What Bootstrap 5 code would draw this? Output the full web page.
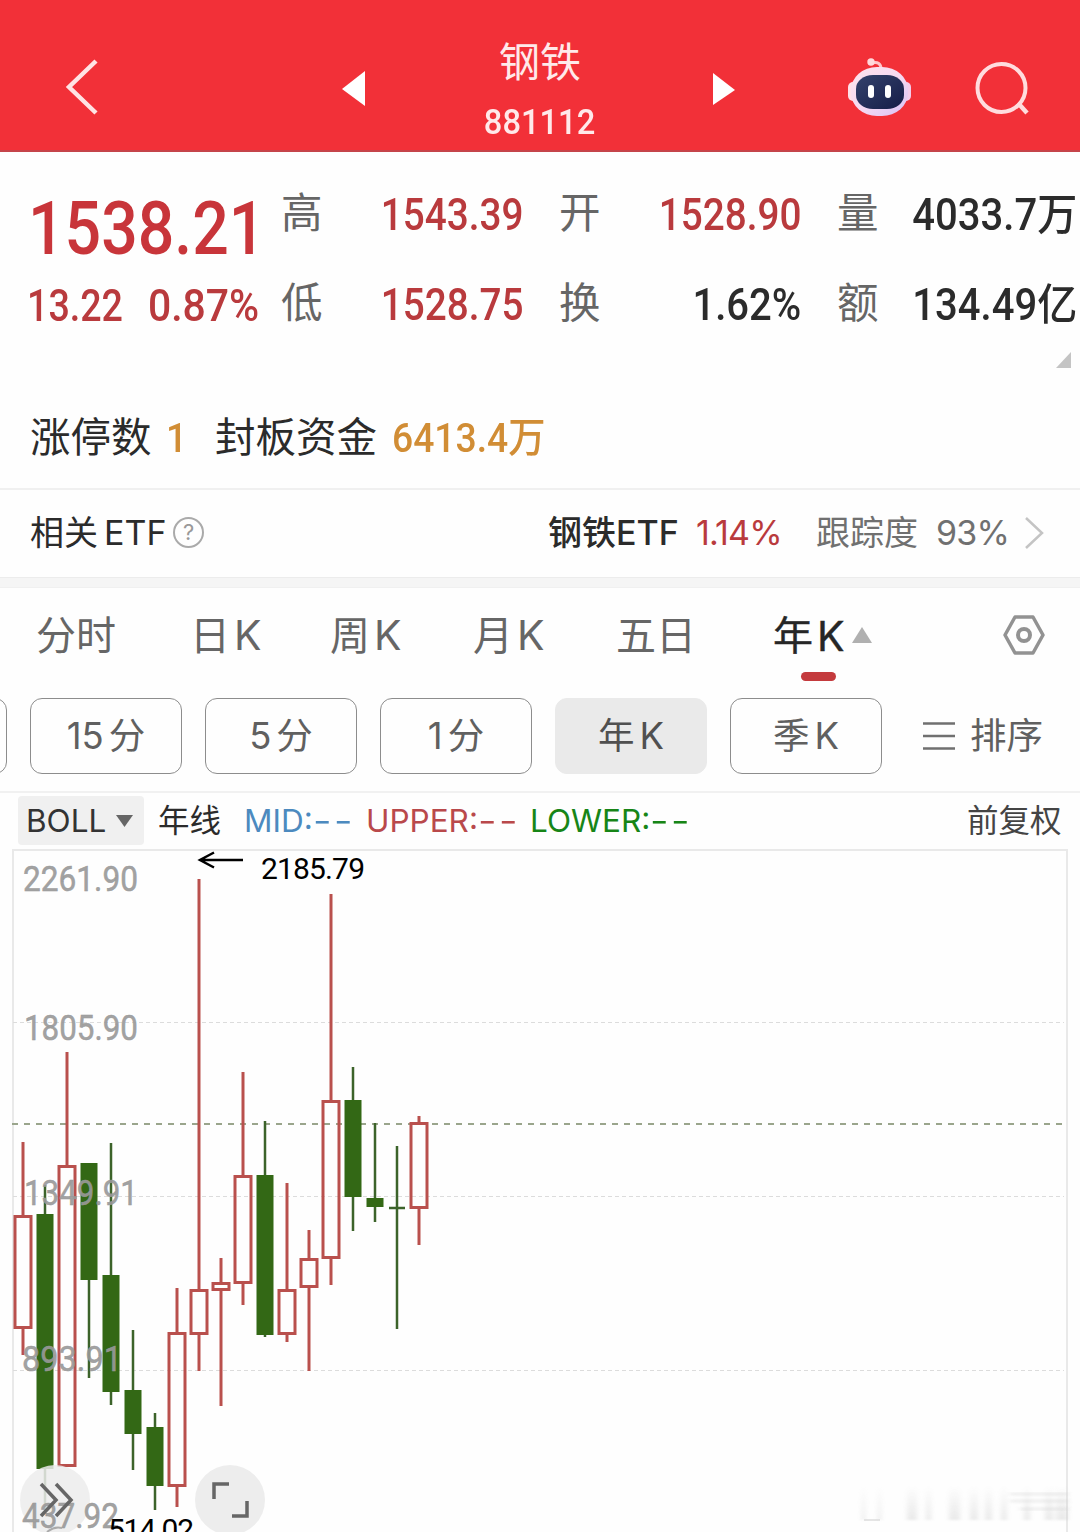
<!DOCTYPE html>
<html lang="zh-CN">
<head>
<meta charset="utf-8">
<meta name="viewport" content="width=device-width, initial-scale=1">
<title>钢铁 881112</title>
<link href="https://cdn.jsdelivr.net/npm/bootstrap@5.3.0/dist/css/bootstrap.min.css" rel="stylesheet">
<style>
body{width:1080px;height:1532px;overflow:hidden;background:#fefefe;color:#2b2b2b;font-family:Inter,"Noto Sans CJK SC",sans-serif;white-space:nowrap}
svg{display:block;flex:none}
.topbar{height:152px;background:#f23038;border-bottom:2px solid #c5444a;color:#ffe9ea}
.t-box{width:112px;padding-top:32px}
.t-name{font-size:41px;line-height:60px}
.t-code{font-size:35.5px;line-height:60px}
.din{font-family:Roboto,"Noto Sans CJK SC",sans-serif;font-weight:500;display:inline-block;transform:scaleX(.92);transform-origin:0 50%}
.din-mid{transform-origin:50% 50%}
.din-end{transform-origin:100% 50%;justify-self:end}
.slim{transform:scaleX(.89)}
.quote{height:336px;padding-top:18px}
.quote-grid{display:grid;grid-template-columns:251px 42px 200px 36px 42px 200px 36px 42px 198px;padding-left:30px;align-items:center;height:88px}
.lab{font-size:41.5px;color:#666;padding-bottom:1px}
.val{font-size:43.5px;padding-top:4px}
.rise{color:#b93a3d}
.big{font-size:74px;color:#c8353a;line-height:88px;margin-left:-2px;transform:translateY(15px) scaleX(.87)}
.delta{margin-left:-3px;padding-top:2px}
.delta .din:first-child{width:121px;transform:scaleX(.865)}
.delta .din:last-child{transform:scaleX(.94)}
.corner{height:22px;padding-right:8px}
.limit{display:grid;grid-template-columns:136px 49px 177px 1fr;padding-left:30px;height:60px;align-items:center;font-size:40.5px;margin-top:40px}
.amber{color:#d18d35}
.etf{display:grid;grid-template-columns:74px 69px 375px 148px 120px 120px 88px 1fr;padding:0 0 2px 30px;height:89px;align-items:center;border-top:2px solid #f0f0f0;font-size:34px}
.etf .pct{letter-spacing:-.8px}
.soft-txt{color:#707070}
.band{height:11px;background:#f5f5f5;border-top:1px solid #ececec;border-bottom:1px solid #f0f0f0}
.tabs{display:grid;grid-template-columns:154px 140px 143px 143px 157px 229px 1fr;padding-left:36px;height:95px;align-items:center;font-size:40px;color:#666;line-height:60px}
.tabs .on{color:#262626;position:relative;-webkit-text-stroke:.4px #262626}
.tabs .on i{position:absolute;left:28px;top:66px;width:35px;height:9px;border-radius:5px;background:#c43a3d}
.k{font-size:41px;margin-left:4px}
.chips{height:110px;padding-top:15px;gap:23px;border-bottom:2px solid #f1f1f1}
.chip{width:152px;height:76px;border:1px solid #8d8d8d;border-radius:12px;font-size:36.5px;color:#606060;display:flex;align-items:center;justify-content:center;flex:none;gap:5px}
.chip.cut{width:37px;margin-left:-30px}
.chip.on{background:#eaeaea;border-color:#eaeaea;color:#505050}
.sort{margin-left:18px;height:76px;font-size:36.5px;color:#606060;gap:15px}
.ind{display:grid;grid-template-columns:126px 14px 86px 122px 164px 437px 1fr;padding-left:18px;height:55px;align-items:center;font-size:31.5px}
.ind b{font-weight:400;letter-spacing:2px;display:inline-block;transform:scaleX(1.28);transform-origin:0 50%}
.boll{background:#f0f0f0;height:49px;border-radius:4px;padding-left:8px;gap:10px;color:#333}
.chart text{font-family:Roboto,sans-serif}
</style>
</head>
<body>
<header class="topbar d-flex align-items-start">
  <svg width="484" height="150" fill="none"><path d="M96 61 69 87 96 113" stroke="#ffe3e4" stroke-width="4.5"/><path d="M342 89 365 71V106Z" fill="#fff"/></svg>
  <div class="t-box text-center d-flex flex-column align-items-center">
    <div class="t-name">钢铁</div>
    <div class="t-code din din-mid">881112</div>
  </div>
  <svg width="484" height="150" viewBox="596 0 484 150" fill="none">
    <defs><linearGradient id="shell" x2="1" y2="1"><stop stop-color="#ffe4ec"/><stop offset=".55" stop-color="#f4d8f2"/><stop offset="1" stop-color="#d8c0f5"/></linearGradient>
    <linearGradient id="visor" x2="1" y2="1"><stop stop-color="#34426c"/><stop offset="1" stop-color="#161d48"/></linearGradient></defs>
    <path d="M713 73 735 90 713 105Z" fill="#fff"/>
    <path d="M872 63Q881 61 881 69" stroke="#ffc6ca" stroke-width="3"/><circle cx="871" cy="62" r="3.7" fill="#ffd9dc"/>
    <rect x="848" y="82" width="10" height="19" rx="5" fill="#ffe0e8"/><rect x="901" y="82" width="10" height="19" rx="5" fill="#f4cdec"/>
    <rect x="851" y="67" width="57" height="49" rx="26" ry="23" fill="url(#shell)"/>
    <rect x="856" y="75" width="48" height="34" rx="17" ry="14" fill="url(#visor)"/>
    <rect x="868" y="85" width="6" height="13" rx="3" fill="#fff"/><rect x="885" y="85" width="6" height="13" rx="3" fill="#fff"/>
    <circle cx="1001.500" cy="88" r="24" stroke="#ffdcde" stroke-width="4"/><path d="M1018 103 1027 113" stroke="#ffdcde" stroke-width="4.500"/>
  </svg>
</header>

<section class="quote">
  <div class="quote-grid">
    <span class="din big">1538.21</span><span class="lab">高</span><span class="din din-end slim val rise">1543.39</span><span></span>
    <span class="lab">开</span><span class="din din-end slim val rise">1528.90</span><span></span><span class="lab">量</span><span class="din din-end val">4033.7万</span>
  </div>
  <div class="quote-grid pt-1">
    <span class="delta d-flex"><span class="din val rise">13.22</span><span class="din val rise">0.87%</span></span><span class="lab">低</span><span class="din din-end slim val rise">1528.75</span><span></span>
    <span class="lab">换</span><span class="din din-end val">1.62%</span><span></span><span class="lab">额</span><span class="din din-end val">134.49亿</span>
  </div>
  <div class="corner d-flex justify-content-end"><svg width="16" height="22"><path d="M0 22 15 6V22Z" fill="#c4c4c4"/></svg></div>
  <div class="limit"><span>涨停数</span><span class="din amber">1</span><span>封板资金</span><span class="din amber">6413.4万</span></div>
</section>

<section class="etf">
  <span>相关</span><span>ETF</span>
  <svg width="32" height="32" fill="none"><circle cx="15.500" cy="15.500" r="14.500" stroke="#aaa" stroke-width="2"/><text x="15.500" y="23" text-anchor="middle" font-size="22" fill="#999">?</text></svg>
  <span class="fw-medium" style="font-weight:500">钢铁ETF</span><span class="rise pct">1.14%</span><span class="soft-txt">跟踪度</span><span class="soft-txt pct">93%</span>
  <svg width="22" height="36" fill="none"><path d="M2 3 18 18 2 33" stroke="#c4c4c4" stroke-width="2.500"/></svg>
</section>
<div class="band"></div>

<nav class="tabs">
  <span>分时</span><span>日<span class="k">K</span></span><span>周<span class="k">K</span></span><span>月<span class="k">K</span></span><span>五日</span>
  <span class="on d-flex align-items-center">年<span class="k">K</span><svg width="21" height="18" style="margin-left:7px"><path d="M0 16 10 0 20 16Z" fill="#b0b0b0"/></svg><i></i></span>
  <svg width="44" height="42" fill="none" stroke="#929292"><path d="M13 2H31L41 20 31 38H13L3 20Z" stroke-width="3.500" stroke-linejoin="round"/><circle cx="22" cy="20" r="6" stroke-width="4"/></svg>
</nav>

<div class="chips d-flex">
  <div class="chip cut"></div><div class="chip"><span>15</span>分</div><div class="chip"><span>5</span>分</div><div class="chip"><span>1</span>分</div><div class="chip on">年<span>K</span></div><div class="chip">季<span>K</span></div>
  <div class="sort d-flex align-items-center"><svg width="32" height="30" stroke="#707070" stroke-width="2.500"><path d="M0 2.500H32M0 15H32M0 27.500H32"/></svg>排序</div>
</div>

<div class="ind">
  <span class="boll d-flex align-items-center">BOLL<svg width="17" height="12"><path d="M0 0H17L8.500 12Z" fill="#666"/></svg></span><span></span>
  <span>年线</span><span style="color:#4c8abf">MID:<b>--</b></span><span style="color:#b9494b">UPPER:<b>--</b></span><span style="color:#178517">LOWER:<b>--</b></span><span style="color:#444">前复权</span>
</div>

<svg class="chart" width="1080" height="684" viewBox="0 848 1080 684" fill="none">
  <defs><filter id="soft"><feGaussianBlur stdDeviation="2.500 1"/></filter>
  <linearGradient id="fade" x2="0" y2="1"><stop stop-color="#bbb" stop-opacity="0"/><stop offset="1" stop-color="#bbb" stop-opacity=".7"/></linearGradient></defs>
  <path d="M12 850H1068M13 850V1532M1067 850V1532" stroke="#e9e9e9" stroke-width="2"/>
  <path d="M13 1022.500H1064M13 1196.500H1064M13 1370.500H1064" stroke="#dcdcdc" stroke-dasharray="4 3"/>
  <path d="M12 1124H1064" stroke="#9aa58c" stroke-width="2" stroke-dasharray="6 6"/>
  <g stroke="#b9504d" stroke-width="3">
    <path d="M23 1142V1216M23 1328V1355M67 1052V1166M177 1288V1333M177 1486V1507M199 879V1290M199 1334V1371M221 1258V1283M221 1291V1406M243 1072V1176M243 1283V1305M287 1183V1290M287 1334V1342M309 1230V1259M309 1287V1371M331 894V1101M331 1258V1285M419 1116V1123M419 1208V1245"/>
    <path d="M15 1216.500H31V1327.500H15ZM59 1166.500H75V1465.500H59ZM169 1333.500H185V1485.500H169ZM191 1290.500H207V1333.500H191ZM213 1283.500H229V1289.500H213ZM235 1176.500H251V1282.500H235ZM279 1290.500H295V1333.500H279ZM301 1259.500H317V1286.500H301ZM323 1101.500H339V1257.500H323ZM411 1123.500H427V1207.500H411Z"/>
  </g>
  <path d="M45 1185V1510M89 1163V1378M111 1143V1405M133 1330V1470M155 1413V1510M265 1121V1337M353 1067V1231M375 1123V1222M397 1146V1329M389 1208H405" stroke="#3c632a" stroke-width="2.500"/>
  <path d="M36.500 1214H53.500V1469H36.500ZM80.500 1163H97.500V1280H80.500ZM102.500 1275H119.500V1392H102.500ZM124.500 1390H141.500V1434H124.500ZM146.500 1427H163.500V1486H146.500ZM256.500 1175H273.500V1335H256.500ZM344.500 1100H361.500V1197H344.500ZM366.500 1198H383.500V1207H366.500Z" fill="#336815"/>
  <circle cx="55" cy="1500" r="35" fill="#ececec" fill-opacity=".85"/><circle cx="230" cy="1500" r="35" fill="#ededed"/>
  <g fill="#999" fill-opacity=".92" stroke="#999" stroke-width=".5" font-size="34.500">
    <text x="23" y="891" textLength="115" lengthAdjust="spacingAndGlyphs">2261.90</text>
    <text x="24" y="1040" textLength="114" lengthAdjust="spacingAndGlyphs">1805.90</text>
    <text x="24" y="1205" textLength="114" lengthAdjust="spacingAndGlyphs">1349.91</text>
    <text x="22" y="1371" textLength="100" lengthAdjust="spacingAndGlyphs">893.91</text>
    <text x="22" y="1528" textLength="97" lengthAdjust="spacingAndGlyphs">437.92</text>
  </g>
  <path d="M41 1484 56 1500 41 1516M56 1484 71 1500 56 1516" stroke="#666" stroke-width="3.500"/>
  <path d="M47 1532Q54 1526 62 1528" stroke="#aaa" stroke-width="2"/>
  <path d="M214 1499V1484H229M247 1501V1516H232" stroke="#666" stroke-width="3.500"/>
  <path d="M243 860H200M214 852.500 200 860 214 867.500" stroke="#000" stroke-width="2.500"/>
  <g fill="#000" font-size="30"><text x="261" y="879" textLength="104">2185.79</text><text x="108" y="1540" textLength="86">514.02</text></g>
  <g filter="url(#soft)" fill="url(#fade)" opacity=".45">
    <path d="M862 1486h3v34h-3zM878 1486h3v34h-3zM907 1486h10v34h-10zM926 1486h5v34h-5zM949 1486h11v34h-11zM970 1486h8v34h-8zM985 1486h7v34h-7zM1001 1486h6v34h-6zM1024 1486h6v34h-6zM1045 1486h8v34h-8zM1056 1486h12v34h-12z"/>
  </g>
  <path d="M864 1520H880" stroke="#ccc"/>
  <path d="M1010 1494H1068M1010 1501H1068M1020 1509H1068" stroke="#ccc" stroke-width="3" opacity=".3" filter="url(#soft)"/>
</svg>
<script src="https://cdn.jsdelivr.net/npm/bootstrap@5.3.0/dist/js/bootstrap.bundle.min.js"></script>
</body>
</html>
